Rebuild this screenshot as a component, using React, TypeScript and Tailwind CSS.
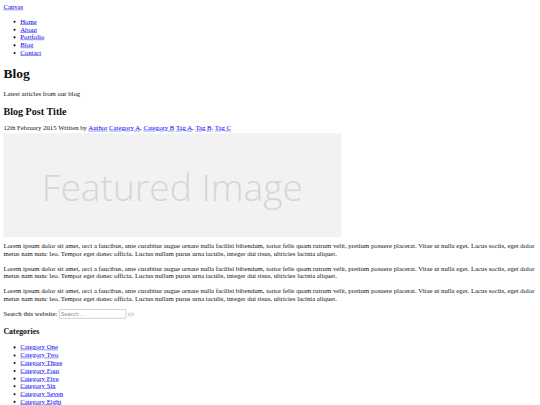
export default function App() {
  const lorem =
    "Lorem ipsum dolor sit amet, orci a faucibus, ante curabitur augue ornare nulla facilisi bibendum, tortor felis quam rutrum velit, pretium posuere placerat. Vitae ut nulla eget. Lacus sociis, eget dolor metus nam nunc leo. Tempor eget donec officia. Luctus nullam purus urna iaculis, integer dui risus, ultricies lacinia aliquet.";
  const link = "text-[#0000ee] underline";
  const cats = ["One", "Two", "Three", "Four", "Five", "Six", "Seven", "Eight"];
  return (
    <div className="w-[540px] h-[405px] overflow-hidden bg-white">
      <div className="w-[1280px] p-[8px] origin-top-left scale-[0.421875] text-[#111] font-['Liberation_Serif',serif] text-[16px] leading-[18.4px]">
        <div>
          <a href="#" className={link}>Canvas</a>
        </div>
        <ul className="list-disc pl-[40px] my-[16px]">
          {["Home", "About", "Portfolio", "Blog", "Contact"].map((n) => (
            <li key={n}>
              <a href="#" className={link}>{n}</a>
            </li>
          ))}
        </ul>
        <h1 className="text-[32px] leading-[36.8px] font-bold my-[21.44px]">Blog</h1>
        <p className="my-[16px]">Latest articles from our blog</p>
        <h2 className="text-[24px] leading-[27.6px] font-bold mt-[19.92px] mb-[15px]">Blog Post Title</h2>
        <div>
          12th February 2015 Written by <a href="#" className={link}>Author</a>{" "}
          <a href="#" className={link}>Category A</a>, <a href="#" className={link}>Category B</a>{" "}
          <a href="#" className={link}>Tag A</a>, <a href="#" className={link}>Tag B</a>,{" "}
          <a href="#" className={link}>Tag C</a>
        </div>
        <div className="mt-[2.5px] w-[801px] h-[246px] bg-[#f2f2f2] flex items-center justify-center">
          <span className="font-['Open_Sans',sans-serif] font-light text-[88px] text-[#d6d6d6] leading-none translate-y-[4px]">
            Featured Image
          </span>
        </div>
        <p className="mt-[13px] mb-[16px]">{lorem}</p>
        <p className="my-[16px]">{lorem}</p>
        <p className="my-[16px]">{lorem}</p>
        <form className="my-[0px]" onSubmit={(e) => e.preventDefault()}>
          <label>
            Search this website:{" "}
            <input
              type="search"
              placeholder="Search …"
              className="border border-[#8f8f8f] rounded-[2px] px-[3px] py-[2px] text-[13.33px] leading-[16px] font-['Liberation_Sans',sans-serif] w-[159px] placeholder:text-[#8a8a8a] align-baseline"
            />
          </label>{" "}
          <button className="inline-block w-[15px] h-[7px] bg-[#e9e9e9] border border-[#b5b5b5] rounded-[3px] align-baseline" />
        </form>
        <h3 className="text-[18.72px] leading-[21.5px] font-bold my-[18.72px]">Categories</h3>
        <ul className="list-disc pl-[40px] my-[16px]">
          {cats.map((c) => (
            <li key={c}>
              <a href="#" className={link}>Category {c}</a>
            </li>
          ))}
        </ul>
      </div>
    </div>
  );
}
